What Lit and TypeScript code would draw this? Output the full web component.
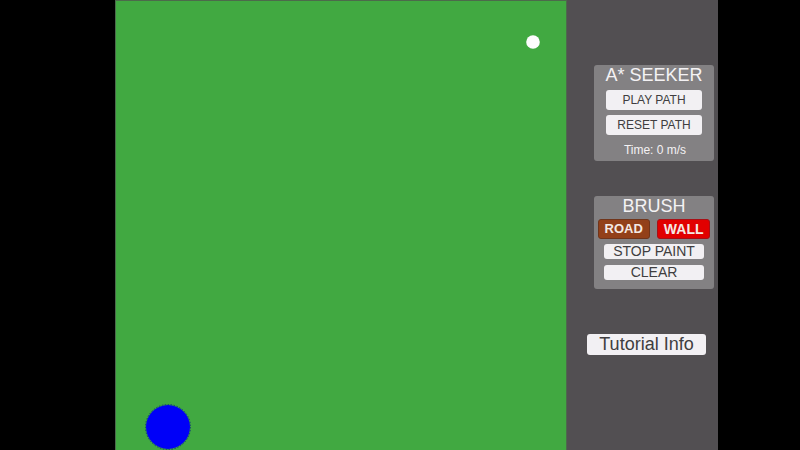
import { LitElement, html, css } from "lit";
import { customElement, state } from "lit/decorators.js";

@customElement("app-root")
export class AppRoot extends LitElement {
  @state() private time = 0;

  static styles = css`
    :host {
      display: grid;
      grid-template-columns: 115fr 452fr minmax(151px, 151fr) 82fr;
      min-height: 100vh;
      background: #000;
      font-family: "Liberation Sans", Arial, sans-serif;
      color: #f4f2f4;
    }
    * {
      box-sizing: border-box;
    }
    .board {
      grid-column: 2;
      position: relative;
      background: #41a941;
      border: 1px solid #4c6a4b;
      border-bottom: 0;
      overflow: hidden;
    }
    .board svg {
      position: absolute;
      display: block;
      transform: translate(-50%, -50%);
    }
    .seeker {
      left: 11.5%;
      top: 94.8%;
      width: 46px;
      height: 46px;
    }
    .goal {
      left: 92.6%;
      top: 9.1%;
      width: 14px;
      height: 14px;
    }
    .side {
      grid-column: 3;
      display: flex;
      flex-direction: column;
      padding: 65px 4px 0 20px;
      background: #524f52;
    }
    .panel {
      display: flex;
      flex-direction: column;
      align-items: center;
      margin: 0 0 35px 7px;
      border-radius: 3px;
      background: #838183;
    }
    h2 {
      margin: 0;
      font-size: 18px;
      line-height: 20px;
      font-weight: 400;
      white-space: nowrap;
    }
    button {
      display: block;
      margin: 0;
      padding: 0;
      border: 0;
      border-radius: 3px;
      background: #f2f0f3;
      color: #403e40;
      font-family: inherit;
      font-size: 12px;
      line-height: 20px;
      white-space: nowrap;
      cursor: pointer;
    }
    .path {
      gap: 5px;
      padding-bottom: 1px;
    }
    .path button {
      width: 80%;
    }
    .time {
      margin: 0;
      padding-left: 2px;
      font-size: 12px;
      line-height: 20px;
    }
    .brush {
      padding-bottom: 9px;
      margin-bottom: 45px;
    }
    .swatches {
      display: flex;
      justify-content: space-between;
      width: 100%;
      padding: 3px 4px;
    }
    .swatches button {
      color: #f4e9e4;
      font-weight: 700;
      line-height: 18px;
    }
    .swatches .road {
      flex: 0 0 46%;
      border: 1px solid #70351b;
      background: #934019;
      font-size: 13px;
    }
    .swatches .wall {
      flex: 0 0 47%;
      border: 1px solid #a81016;
      background: #e10000;
      font-size: 14px;
    }
    .wides {
      display: flex;
      flex-direction: column;
      gap: 6px;
      width: 84%;
      padding-top: 2px;
    }
    .wides button {
      font-size: 14px;
      line-height: 15px;
    }
    .info {
      margin-right: 8px;
      font-size: 18px;
      line-height: 21px;
    }
  `;

  render() {
    return html`
      <main class="board">
        <svg class="goal" viewBox="0 0 14 14" aria-label="Goal">
          <circle cx="7" cy="7" r="6.8" fill="#fdfdfd" />
        </svg>
        <svg class="seeker" viewBox="0 0 46 46" aria-label="Seeker">
          <circle cx="23" cy="23" r="22" fill="#0000f8" />
          <circle cx="23" cy="23" r="22.5" fill="none" stroke="#123c78" stroke-width="1" stroke-dasharray="1.5 1.5" />
        </svg>
      </main>
      <aside class="side">
        <section class="panel path">
          <h2>A* SEEKER</h2>
          <button type="button">PLAY PATH</button>
          <button type="button" @click=${() => (this.time = 0)}>RESET PATH</button>
          <p class="time">Time: ${this.time} m/s</p>
        </section>
        <section class="panel brush">
          <h2>BRUSH</h2>
          <div class="swatches">
            <button type="button" class="road">ROAD</button>
            <button type="button" class="wall">WALL</button>
          </div>
          <div class="wides">
            <button type="button">STOP PAINT</button>
            <button type="button">CLEAR</button>
          </div>
        </section>
        <button type="button" class="info">Tutorial Info</button>
      </aside>
    `;
  }
}
